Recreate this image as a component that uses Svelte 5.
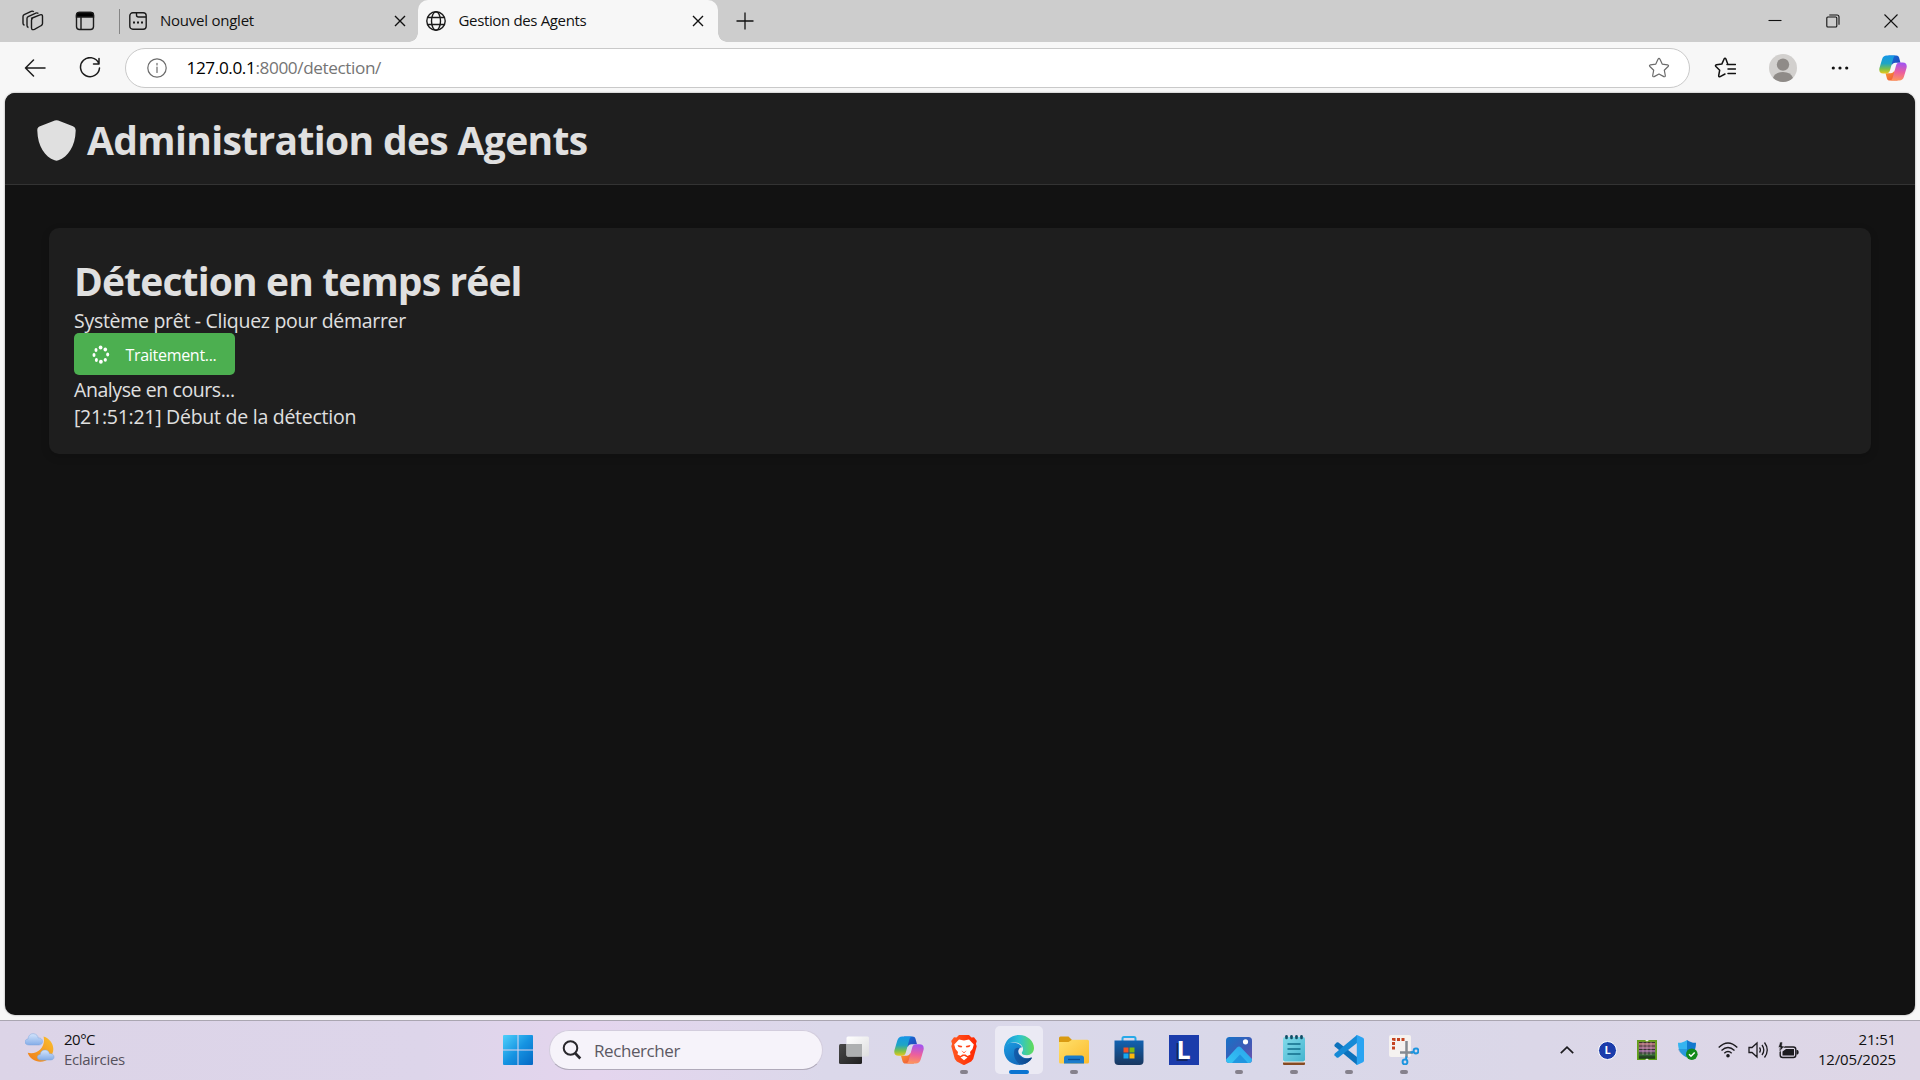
<script>
  const logs = ['Analyse en cours...', '[21:51:21] Début de la détection'];
</script>

{#snippet closeIcon()}
  <svg class="close" width="12" height="12" viewBox="0 0 12 12"><path d="M1 1 11 11M11 1 1 11" /></svg>
{/snippet}

{#snippet copilot(size, id)}
  <svg width={size} height={size} viewBox="0 0 30 30">
    <defs>
      <linearGradient id="{id}a" x1="0" y1="0" x2="0" y2="1">
        <stop offset="0" stop-color="#1596e8" /><stop offset=".45" stop-color="#1fa5c4" /><stop offset=".75" stop-color="#7cc04a" /><stop offset="1" stop-color="#e8c81c" />
      </linearGradient>
      <linearGradient id="{id}b" x1=".2" y1="0" x2=".1" y2="1">
        <stop offset="0" stop-color="#a455ee" /><stop offset=".5" stop-color="#ec5f9e" /><stop offset="1" stop-color="#ff9a56" />
      </linearGradient>
      <linearGradient id="{id}c" x1="0" y1="0" x2="1" y2="1">
        <stop offset="0" stop-color="#1272d8" /><stop offset="1" stop-color="#2442b8" />
      </linearGradient>
      <linearGradient id="{id}d" x1="0" y1="0" x2="1" y2="1">
        <stop offset="0" stop-color="#f8a02e" /><stop offset="1" stop-color="#ef4a3c" />
      </linearGradient>
    </defs>
    <path fill="url(#{id}c)" d="M10 1.5h8.5c1.6 0 2.5.8 3 2.3L23 9.3h-5.5c-2 0-3.2 1-3.8 3z" />
    <path fill="url(#{id}d)" d="M20 28.5h-8.500c-1.600 0-2.500-.8-3-2.300L7 20.700h5.500c2 0 3.200-1 3.800-3z" />
    <path fill="url(#{id}a)" d="M8.200 1.500H18c-1.500.3-2.200 1.500-2.700 3.200l-3.500 12.800c-.6 2.200-1.800 3.300-4 3.300H4.500C1 20.800-.3 18.500.5 15L3.300 5.500C4.200 2.700 5.700 1.500 8.200 1.500z" />
    <path fill="url(#{id}b)" d="M21.800 28.500H12c1.500-.3 2.200-1.500 2.700-3.200l3.500-12.800c.6-2.200 1.800-3.300 4-3.300h3.300c3.500 0 4.800 2.300 4 5.800l-2.800 9.500c-.9 2.800-2.400 4-4.900 4z" />
  </svg>
{/snippet}

<div class="screen">
  <header class="tabs">
    <div class="tools">
      <svg width="22" height="22" viewBox="0 0 22 22" class="line">
        <path d="M9 8.500 18 4.800q2.500-.8 2.500 1.500v7.200q0 1.400-1.200 2l-6.800 3.800q-3 1.200-3-1.500v-7.600q0-1.300 1.200-1.900" />
        <path d="M6.500 17.500q-1.500-.4-1.500-2V8.600q0-1.300 1.200-1.900l7.600-3.600q1.500-.6 2.600.5" />
        <path d="M2.500 15.200Q1 14.800 1 13.200V6.600q0-1.300 1.200-1.900l7-3.400q1.500-.6 2.600.5" />
      </svg>
      <svg width="20" height="20" viewBox="0 0 20 20" class="line">
        <rect x="1.500" y="1.500" width="17" height="17" rx="3" /><path d="M1.500 6V4q0-2.500 2.500-2.500h12q2.500 0 2.500 2.500v2z" fill="#000" /><path d="M6 6v12" />
      </svg>
    </div>
    <div class="tab">
      <svg width="18" height="18" viewBox="0 0 18 18" class="line tabicon">
        <rect x=".8" y=".8" width="16.400" height="16.400" rx="3" /><path d="M7.500 1v2q0 2 2 2h7.500" />
        <path d="M4 10.500h2M8 10.500h2M12 10.500h2" stroke-width="2" />
      </svg>
      <span class="title first">Nouvel onglet</span>
      {@render closeIcon()}
    </div>
    <div class="tab active">
      <svg width="20" height="20" viewBox="0 0 20 20" class="line tabicon">
        <circle cx="10" cy="10" r="9.200" /><ellipse cx="10" cy="10" rx="4.500" ry="9.200" /><path d="M1.800 6.500h16.400M1.800 13.500h16.400" />
      </svg>
      <span class="title">Gestion des Agents</span>
      {@render closeIcon()}
    </div>
    <svg class="plus" width="18" height="18" viewBox="0 0 18 18"><path d="M9 .5v17M.5 9h17" /></svg>
    <div class="window">
      <svg width="14" height="14" viewBox="0 0 14 14"><path d="M.5 6.500h13" /></svg>
      <svg width="14" height="14" viewBox="0 0 14 14"><rect x=".8" y="3" width="10" height="10" rx="1" /><path d="M3.300 1h7.700q2 0 2 2v7.800" /></svg>
      <svg width="14" height="14" viewBox="0 0 14 14"><path d="M.5.5l13 13M13.500.5l-13 13" /></svg>
    </div>
  </header>

  <nav class="toolbar">
    <svg class="back" width="22" height="18" viewBox="0 0 22 18"><path d="M21 9H1.500M9.500 1 1.500 9l8 8" /></svg>
    <svg class="reload" width="22" height="22" viewBox="0 0 22 22"><path d="M19.800 6.500A9.500 9.500 0 1 0 20.500 11M20 1.500v5.500h-5.500" /></svg>
    <div class="address">
      <svg width="20" height="20" viewBox="0 0 20 20" class="info"><circle cx="10" cy="10" r="9.200" /><path d="M10 9v5.500M10 5.300v1.700" /></svg>
      <span class="url"><b>127.0.0.1</b><span>:8000/detection/</span></span>
      <svg width="22" height="22" viewBox="0 0 22 22" class="star"><path d="M10 2.200q1-1.700 2 0l2.200 4.900 5.300.7q1.700.4.600 1.700L16.300 13.200l1 5.300q.1 1.700-1.500 1.100L11 17l-4.800 2.600q-1.600.6-1.500-1.100l1-5.300L1.900 9.500q-1.100-1.300.6-1.700l5.300-.7z" /></svg>
    </div>
    <svg class="fav" width="22" height="22" viewBox="0 0 22 22"><path d="M13.800 7.200 12 2.200q-1-1.700-2 0L7.800 7.100l-5.300.7Q.8 8.200 1.900 9.500l3.800 3.700-1 5.300q-.1 1.700 1.500 1.100L11 17M13 7.500h8.500M14 12h7.500M14 16.500h7.500" /></svg>
    <svg class="avatar" width="28" height="28" viewBox="0 0 28 28">
      <clipPath id="round"><circle cx="14" cy="14" r="14" /></clipPath>
      <g clip-path="url(#round)"><rect width="28" height="28" fill="#d2d0ce" /><circle cx="14" cy="10.600" r="6.200" fill="#8f8b88" /><path d="M4 28v-4q2-6 10-6t10 6v4z" fill="#8f8b88" /></g>
    </svg>
    <svg class="dots" width="18" height="4" viewBox="0 0 18 4"><circle cx="2.300" cy="2" r="1.600" /><circle cx="9" cy="2" r="1.600" /><circle cx="15.700" cy="2" r="1.600" /></svg>
    <span class="pilot">{@render copilot(28, 'top')}</span>
  </nav>

  <main class="page">
    <div class="banner">
      <svg width="39" height="41" viewBox="0 0 39 41"><path fill="#e0e0e0" d="M17.800.5q1.700-.7 3.400 0L36 6.200q2.800 1.200 2.700 4.200C38.300 26.500 31 36.500 21.400 40.300q-1.900.7-3.800 0C8 36.500.7 26.500.3 10.400.2 7.400 1.600 6.800 3 6.200z" /></svg>
      <h1>Administration des Agents</h1>
    </div>
    <section class="card">
      <h2>Détection en temps réel</h2>
      <p class="status">Système prêt - Cliquez pour démarrer</p>
      <button>
        <svg width="18" height="20" viewBox="0 0 18 20" fill="#fff">
          <ellipse cx="8.600" cy="2.600" rx="1.900" ry="2" /><ellipse cx="13.300" cy="4.600" rx="1.800" ry="2" /><ellipse cx="15.700" cy="9.500" rx="1.500" ry="2" />
          <ellipse cx="13.300" cy="14.800" rx="1.600" ry="1.900" /><ellipse cx="8.900" cy="16.800" rx="1.900" ry="2" /><ellipse cx="4.400" cy="15" rx="1.500" ry="2" />
          <ellipse cx="2" cy="10" rx="1.500" ry="2" /><ellipse cx="4" cy="5" rx="1.500" ry="2" />
        </svg>
        <span>Traitement...</span>
      </button>
      {#each logs as line, i}
        <p class:log={i === 1}>{line}</p>
      {/each}
    </section>
  </main>

  <footer class="taskbar">
    <div class="weather">
      <svg width="30" height="30" viewBox="0 0 30 30">
        <defs>
          <linearGradient id="moon" x1="1" y1="0" x2="0" y2="1"><stop offset="0" stop-color="#fbc02c" /><stop offset="1" stop-color="#ee7d1c" /></linearGradient>
          <linearGradient id="cloud" x1="0" y1="0" x2="0" y2="1"><stop offset="0" stop-color="#d4e4fb" /><stop offset="1" stop-color="#84ade8" /></linearGradient>
        </defs>
        <path fill="url(#moon)" d="M18.500 3.500C28 6.500 31.500 17 25 24.500 18 32 5.500 29 2.700 19.800c10 2.500 18.500-6.500 15.800-16.300z" />
        <path fill="url(#cloud)" stroke="#7fa6df" stroke-width=".5" d="M4 12c-5 0-5.500-5.500-1-6C3.500 1.500 6.500.3 9 .8c2.500.3 4 2.200 4.200 4.200 5.300-.8 6 7 .8 7z" />
        <path fill="url(#cloud)" stroke="#7fa6df" stroke-width=".5" d="M16 27c-4.500 0-5-5-.8-5.500.4-3 2.300-4.700 5-4.500 2.300 0 3.900 1.700 4.300 3.700 5.500-.8 6 6.300 1.500 6.300z" />
      </svg>
      <div><span class="temp">20°C</span><span class="sky">Eclaircies</span></div>
    </div>

    <svg class="start" width="30" height="30" viewBox="0 0 30 30">
      <linearGradient id="win" gradientUnits="userSpaceOnUse" x1="0" y1="0" x2="30" y2="30"><stop offset="0" stop-color="#4fd0fb" /><stop offset=".5" stop-color="#1694e2" /><stop offset="1" stop-color="#0568c4" /></linearGradient>
      <path fill="url(#win)" d="M1 0h13.500v14.500H0V1q0-1 1-1zM15.500 0H29q1 0 1 1v13.500H15.500zM0 15.500h14.500V30H1q-1 0-1-1zM15.500 15.500H30V29q0 1-1 1H15.500z" />
    </svg>
    <div class="search">
      <svg width="20" height="20" viewBox="0 0 20 20"><circle cx="8.500" cy="8" r="6.800" /><path d="m13 13 5.300 5.500" stroke-width="2.600" /></svg>
      <span>Rechercher</span>
    </div>

    <div class="apps">
      <div class="app">
        <svg width="30" height="30" viewBox="0 0 30 30">
          <linearGradient id="tv" x1="0" y1="0" x2="1" y2="1"><stop offset="0" stop-color="#494949" /><stop offset="1" stop-color="#202020" /></linearGradient>
          <linearGradient id="tw" x1="0" y1="0" x2="1" y2="1"><stop offset="0" stop-color="#fff" /><stop offset="1" stop-color="#dededf" /></linearGradient>
          <rect x="0" y="9" width="23" height="20" rx="1.500" fill="url(#tv)" /><rect x="7.500" y="1.500" width="22.500" height="20" rx="1.500" fill="url(#tw)" /><path d="M7.500 9H23v12.500H9q-1.500 0-1.500-1.500z" fill="#aeb0b1" />
        </svg>
      </div>
      <div class="app">{@render copilot(30, 'bar')}</div>
      <div class="app run">
        <svg width="26" height="30" viewBox="0 0 26 30">
          <linearGradient id="lion" x1="0" y1="0" x2="1" y2="0"><stop offset="0" stop-color="#ff5a22" /><stop offset="1" stop-color="#ff2600" /></linearGradient>
          <path fill="url(#lion)" d="M8 0h10l2.500 2.600 2.500-.4L25.800 6l-.9 2.700.8 2.600-3.500 12.800-2 2.300L13 30.200l-7.200-3.800-2-2.300L.3 11.300l.8-2.600L.2 6 3 2.200l2.500.4z" />
          <path fill="#fff" d="m8 4.600 5 .9 5-.9 4.800 4.900-1.300 4.500-2.500 3 .5 2.500-3 1.500-2-1.500h-3l-2 1.500-3-1.500.5-2.500-2.500-3-1.300-4.500zM13 20.800l3.500 1.700L13 25.300l-3.500-2.800z" />
          <path fill="#ff4318" d="m6.500 10 4.800 1-.8 1.500-3-.5zM19.500 10l-4.800 1 .8 1.500 3-.5zM11.300 13.200l-.5 2.500 2.200 1.600 2.200-1.600-.5-2.500.6 2.800-2.300 2.300-2.300-2.300z" />
        </svg>
      </div>
      <div class="app current">
        <svg width="30" height="30" viewBox="0 0 30 30">
          <defs>
            <linearGradient id="e1" x1="0" y1=".6" x2="1" y2=".6"><stop offset="0" stop-color="#168fd8" /><stop offset=".5" stop-color="#2bc1d5" /><stop offset="1" stop-color="#63dc55" /></linearGradient>
            <linearGradient id="e2" x1="0" y1="0" x2=".8" y2="1"><stop offset="0" stop-color="#1b9de2" /><stop offset="1" stop-color="#1260b4" /></linearGradient>
            <linearGradient id="e3" x1="0" y1="0" x2="1" y2="0"><stop offset="0" stop-color="#135fae" /><stop offset="1" stop-color="#0e4486" /></linearGradient>
          </defs>
          <path fill="url(#e2)" d="M0 14C2 7 9 6.500 13.500 8.500c5 2 5.500 5 3.200 7-2 5 2.300 9.200 10.800 7.800C24 29 18 30.500 13 29.800 4.500 28.500-.5 21.500 0 14z" />
          <path fill="url(#e3)" d="M10.500 14.500C8.500 21 12 28.500 18 29.500c4.500-.7 8-3 9.900-6.200.3-.7-.2-1-.8-.7-7.500 3-13.600-1.600-12.600-6.200.4-1.800 1.300-2.800 2-3.200-2.500-1-4.700-.6-6 1.300z" />
          <path fill="#ebeaf4" d="M17.800 12.300c1.300 2-.5 3.500-.3 5 .3 2 3.500 3.300 6.500 3-2.500 3.300-8.700.8-9.500-2.800-.6-2.700 1-5 3.300-5.200z" />
          <path fill="url(#e1)" d="M0 14C.8 5.500 7 0 15 0c9 0 15 6.500 15 13 0 4.500-3.300 7.200-7 7.200-3.500 0-6-1.400-5-3 2.300-3 .7-7-3-8.800C9 5.800 2.500 8 0 14z" />
        </svg>
      </div>
      <div class="app run">
        <svg width="30" height="28" viewBox="0 0 30 28">
          <linearGradient id="fold" x1="0" y1="0" x2="1" y2="1"><stop offset="0" stop-color="#ffe06c" /><stop offset="1" stop-color="#fcbb2c" /></linearGradient>
          <path fill="#d99a12" d="M0 2Q0 .5 1.500.5h8L13 4v3H0z" /><path fill="url(#fold)" d="M0 6h9.500L13 3.800h15.500q1.500 0 1.500 1.500V26q0 1.500-1.500 1.500h-27Q0 27.500 0 26z" />
          <path fill="#1b7ccb" d="M5 27.500V22q0-2.500 2.500-2.500h15Q25 19.500 25 22v5.500z" /><path d="M9 23.500h12" stroke="#0b4d91" stroke-width="1.300" />
        </svg>
      </div>
      <div class="app">
        <svg width="30" height="30" viewBox="0 0 30 30">
          <linearGradient id="shop" x1="0" y1="0" x2="0" y2="1"><stop offset="0" stop-color="#1262b1" /><stop offset="1" stop-color="#19375f" /></linearGradient>
          <path d="M8.500 7V3.500q0-1.500 1.500-1.500h10q1.500 0 1.500 1.500V7" fill="none" stroke="#28a9e8" stroke-width="2" />
          <path fill="url(#shop)" d="M.5 5.500h29V26q0 4-4 4h-21q-4 0-4-4z" />
          <path fill="#f15325" d="M9.500 12.500h5v5h-5z" /><path fill="#7fbb11" d="M15.500 12.500h5v5h-5z" /><path fill="#16a8ef" d="M9.500 18.500h5v5h-5z" /><path fill="#fdb90b" d="M15.500 18.500h5v5h-5z" />
        </svg>
      </div>
      <div class="app"><span class="letter">L</span></div>
      <div class="app run">
        <svg width="26" height="26" viewBox="0 0 26 26">
          <defs>
            <linearGradient id="ph" x1="0" y1="0" x2="1" y2="1"><stop offset="0" stop-color="#1673c8" /><stop offset=".6" stop-color="#4059b5" /><stop offset="1" stop-color="#7154ad" /></linearGradient>
            <linearGradient id="hill" x1="0" y1="1" x2="1" y2="0"><stop offset="0" stop-color="#35c6f4" /><stop offset="1" stop-color="#2aa0eb" /></linearGradient>
            <clipPath id="phc"><rect width="26" height="26" rx="3.500" /></clipPath>
          </defs>
          <g clip-path="url(#phc)"><rect width="26" height="26" fill="url(#ph)" /><path fill="url(#hill)" d="M0 22.500 11 10.500q2-2 4 0l11 11.500v4H0z" /><path fill="#1782d6" d="m6 26 8-8.500 8 8.500z" opacity=".65" /></g>
          <circle cx="19.500" cy="4.800" r="2.600" fill="#fff" />
        </svg>
      </div>
      <div class="app run">
        <svg width="22" height="30" viewBox="0 0 22 30">
          <linearGradient id="note" x1="0" y1="0" x2="1" y2="1"><stop offset="0" stop-color="#83dbea" /><stop offset="1" stop-color="#44b4cf" /></linearGradient>
          <path fill="#f3efe9" d="M0 24h22v4H0z" /><path fill="#864a22" d="M0 27.500h22V29q0 1-1 1H1q-1 0-1-1z" />
          <rect y="2" width="22" height="24.500" rx="2" fill="url(#note)" />
          <path d="M4.500 9h13M4.500 14h13M4.500 19h13" stroke="#126e8b" stroke-width="1.700" />
          <g fill="#124e66"><rect x="2.200" y="0" width="2.600" height="4.200" rx="1.300" /><rect x="7.200" y="0" width="2.600" height="4.200" rx="1.300" /><rect x="12.200" y="0" width="2.600" height="4.200" rx="1.300" /><rect x="17.200" y="0" width="2.600" height="4.200" rx="1.300" /></g>
        </svg>
      </div>
      <div class="app run">
        <svg width="30" height="30" viewBox="0 0 30 30">
          <path fill="#0d72bc" d="M.5 9.800 2.600 7.600q.9-.7 1.900 0L23 22v8L.8 11.500q-.8-.9-.3-1.700z" />
          <path fill="#168ad6" d="M.5 20.200l2.100 2.200q.9.700 1.900 0L23 8V0L.8 18.500q-.8.900-.3 1.700z" />
          <path fill="#2aa4f2" d="M22 .2q.8-.4 1.600 0l5.400 2.600q1 .6 1 1.700v21q0 1.100-1 1.700l-5.400 2.600q-.8.400-1.600 0 .8-.4.800-1.600V1.800Q22.800.6 22 .2z" />
        </svg>
      </div>
      <div class="app run">
        <svg width="30" height="30" viewBox="0 0 30 30">
          <rect width="22" height="22" rx="2" fill="#f5f2f0" />
          <path d="M15.500 4.500H4.500V16" fill="none" stroke="#c5431f" stroke-width="3" stroke-dasharray="3 1.500" />
          <path d="M17.500 6v16.500M11 17.500h13" stroke="#858b91" stroke-width="2.500" />
          <circle cx="16" cy="27" r="2.400" fill="none" stroke="#1d95df" stroke-width="2" /><circle cx="27" cy="16" r="2.400" fill="none" stroke="#1d95df" stroke-width="2" />
          <path d="m17 24 .5-2.500M21.500 17.500l3-.5" stroke="#1d95df" stroke-width="2" />
        </svg>
      </div>
    </div>

    <div class="tray">
      <svg width="14" height="8" viewBox="0 0 14 8" fill="none" stroke="#1c1b1f" stroke-width="1.700"><path d="m.8 7.200 6.200-6 6.200 6" /></svg>
      <span class="round">L</span>
      <svg width="20" height="20" viewBox="0 0 20 20">
        <linearGradient id="chip" x1="0" y1="0" x2="0" y2="1"><stop offset="0" stop-color="#b5746a" /><stop offset=".55" stop-color="#94689a" /><stop offset=".75" stop-color="#3a6a3a" /><stop offset="1" stop-color="#10420f" /></linearGradient>
        <rect width="20" height="20" fill="#62a01c" /><rect x="1.800" y="1.800" width="16.400" height="17" fill="url(#chip)" />
        <path d="M2 2.500h16M2 6h16M2 9.500h16M2 13h16M2 17h16" stroke="#2a2c26" stroke-width=".9" /><path d="M6 2v13M10 2v13M14 2v13" stroke="#e2b4cb" stroke-width=".7" opacity=".7" />
        <path d="M8 0h4l-2 1.500zM8 20h4l-2-1.500z" fill="#f5f7f2" />
      </svg>
      <svg width="20" height="20" viewBox="0 0 20 20">
        <path fill="#35b4f0" d="M9 0v17.500C3.500 15 0 11 0 2.800 3.500 3 6 2 9 0z" /><path fill="#1279ce" d="M9 0c3 2 5.500 3 9 2.800 0 8.200-3.500 12.200-9 14.700z" /><path fill="#1266b5" d="M0 9h9v8.500C4.500 15.500 1 12.500 0 9z" opacity=".35" />
        <circle cx="13.800" cy="14.200" r="5.800" fill="#128a1b" /><path d="m11 14.200 2 2 3.700-3.800" fill="none" stroke="#fff" stroke-width="1.500" />
      </svg>
      <svg width="20" height="16" viewBox="0 0 20 16" fill="none" stroke="#1c1b1f" stroke-width="1.400"><path d="M.7 5.500q9.300-9 18.600 0M3.500 8.500q6.500-6.200 13 0M6.300 11.300q3.700-3.400 7.400 0" /><circle cx="10" cy="13.700" r="1.100" fill="#1c1b1f" /></svg>
      <svg width="21" height="18" viewBox="0 0 21 18" fill="none" stroke="#1c1b1f" stroke-width="1.300"><path d="M1 6.500h3L9 2v14l-5-4.500H1zM11.500 6.500q1.800 2.500 0 5M14 4q3.600 5 0 10M16.500 1.500q5.500 7.500 0 15" /></svg>
      <svg width="21" height="17" viewBox="0 0 21 17"><rect x="2.200" y="5" width="15.600" height="10.500" rx="2.500" fill="none" stroke="#1c1b1f" stroke-width="1.400" /><path fill="#1c1b1f" d="M4.500 9.500 8 7h8v6.500H4.500zM18.500 8h1q1.200.3 1.200 2.300t-1.200 2.200h-1z" /><path fill="#1c1b1f" stroke="#ddd6e8" stroke-width=".6" d="M4.500 0H2L.3 5.500h2L1.500 10l5-6H4z" /></svg>
      <div class="clock"><span class="hour">21:51</span><span>12/05/2025</span></div>
    </div>
  </footer>
</div>

<style>
  :global(body) { margin: 0; overflow: hidden; }
  .screen {
    width: 1920px; height: 1080px; box-sizing: border-box; display: flex; flex-direction: column;
    background: #f7f7f7; font-family: "Open Sans", "Noto Sans", sans-serif; color: #111;
  }
  svg { display: block; flex: none; }
  .line { fill: none; stroke: #1b1b1b; stroke-width: 1.4; }
  h1, h2, p { margin: 0; }

  /* Tab strip */
  .tabs { height: 42px; flex: none; display: flex; align-items: center; background: #cdcdcd; }
  .tools { width: 120px; height: 25px; box-sizing: border-box; padding-left: 22px; display: flex; align-items: center; gap: 31px; border-right: 1px solid #858585; }
  .tab { display: flex; align-items: center; width: 298px; height: 42px; box-sizing: border-box; padding: 0 12px 0 9px; font-size: 15px; letter-spacing: -0.35px; }
  .tab .title { flex: 1; margin-left: 13px; line-height: 40px; height: 42px; color: #111; }
  .tab .first { letter-spacing: -0.24px; }
  .close { fill: none; stroke: #111; stroke-width: 1.4; }
  .active { position: relative; width: 300px; background: #f7f7f7; border-radius: 10px 10px 0 0; padding: 0 14px 0 8px; }
  .active .title { margin-left: 12.5px; }
  .active::before, .active::after { content: ""; position: absolute; bottom: 0; width: 9px; height: 9px; }
  .active::before { left: -9px; background: radial-gradient(circle at 0 0, transparent 8.5px, #f7f7f7 9px); }
  .active::after { right: -9px; background: radial-gradient(circle at 100% 0, transparent 8.5px, #f7f7f7 9px); }
  .tabicon { margin-bottom: 1px; }
  .plus { margin-left: 18px; margin-bottom: 1px; fill: none; stroke: #111; stroke-width: 1.3; }
  .window { margin-left: auto; padding-right: 22px; display: flex; gap: 44px; fill: none; stroke: #111; stroke-width: 1.1; }

  /* Toolbar */
  .toolbar { height: 51px; flex: none; display: flex; align-items: center; box-sizing: border-box; padding: 0 13px 0 24px; }
  .toolbar path { stroke-linecap: round; stroke-linejoin: round; }
  .back, .reload { fill: none; stroke: #1b1b1b; stroke-width: 1.5; }
  .reload { margin-left: 33px; }
  .address { width: 1565px; height: 40px; box-sizing: border-box; margin-left: 24px; padding: 0 19px 0 21px; display: flex; align-items: center; background: #fff; border: 1px solid #c9c9c9; border-radius: 20px; }
  .info, .star { fill: none; stroke: #6b6b6b; stroke-width: 1.2; }
  .url { flex: 1; height: 38px; margin-left: 19.5px; font-size: 17.2px; line-height: 37px; }
  .url b { font-weight: 400; color: #000; letter-spacing: -0.4px; }
  .url span { color: #757575; letter-spacing: -0.4px; }
  .fav { margin-left: 24px; fill: none; stroke: #111; stroke-width: 1.5; }
  .avatar { margin-left: 33px; }
  .dots { margin-left: 34px; fill: #111; }
  .pilot { margin-left: 30px; }

  /* Web page */
  .page { height: 922px; flex: none; margin: 0 5px; background: #121212; border-radius: 10px; overflow: hidden; color: #e0e0e0; box-shadow: 0 0 2px #888; }
  .banner { height: 92px; box-sizing: border-box; padding: 1px 0 0 32px; display: flex; align-items: center; gap: 11px; background: #1e1e1e; border-bottom: 1px solid #333; }
  .banner svg { margin-top: 2px; }
  h1, h2 { font-size: 39px; font-weight: 700; letter-spacing: -0.65px; }
  h2 { line-height: 52px; padding-top: 2px; letter-spacing: -0.87px; }
  .card { margin: 43px 44px 0; padding: 25px 25px 24px; background: #1e1e1e; border-radius: 10px; box-shadow: 0 3px 8px rgba(0, 0, 0, 0.15); }
  .card p { font-size: 19.5px; line-height: 27px; letter-spacing: -0.42px; }
  .card .status { height: 26px; letter-spacing: -0.29px; }
  .card .log { letter-spacing: -0.26px; }
  button { display: flex; align-items: center; width: 161px; height: 42px; box-sizing: border-box; margin: 0 0 1px; padding: 1px 0 0 18px; gap: 15.5px; border: 0; border-radius: 5px; background: #4caf50; color: #fff; font: 400 16px "Open Sans", sans-serif; letter-spacing: -0.3px; }

  /* Taskbar */
  .taskbar { height: 60px; flex: none; margin-top: auto; box-sizing: border-box; border-top: 1px solid #aaa6b1; padding: 0 24px 0 25px; display: flex; align-items: center; background: linear-gradient(90deg, #dcd4e7 0, #ddd5ea 22%, #e4d5ee 31%, #dbd8ea 43%, #d9d8e9 65%, #dbd7e8 80%, #ded6e6 100%); }
  .weather { width: 478px; display: flex; gap: 9px; align-items: center; font-size: 15px; }
  .weather div { display: flex; flex-direction: column; line-height: 20px; margin-bottom: 4px; }
  .weather svg { margin-bottom: 5px; }
  .temp { letter-spacing: -0.5px; }
  .sky { color: #55515c; letter-spacing: -0.33px; }
  .start { margin-bottom: 1px; }
  .search { width: 274px; height: 40px; box-sizing: border-box; margin: 0 3px 1px 16px; padding-left: 12px; display: flex; align-items: center; gap: 12px; background: #f6f3fa; border: 1px solid #d3cddd; border-bottom-color: #b0aaba; border-radius: 20px; font-size: 17px; letter-spacing: -0.42px; color: #5c5963; }
  .search svg { fill: none; stroke: #29272c; stroke-width: 2; }
  .apps { display: flex; margin-bottom: 1px; }
  .app { position: relative; width: 55px; height: 48px; display: flex; align-items: center; justify-content: center; }
  .run::after, .current::after { content: ""; position: absolute; bottom: 0; left: 23.5px; width: 8px; height: 4px; border-radius: 2px; background: #85818c; }
  .current { width: 48px; margin: 0 3.5px; background: #ebeaf4; border-radius: 5px; }
  .current::after { left: 14px; width: 20px; background: #0b74d1; }
  .letter { width: 30px; height: 30px; background: #1b3cab; color: #fff; font: 700 25px/29px "Open Sans", sans-serif; text-align: center; text-shadow: -2px 2px #12245f; }
  .tray { margin-left: auto; margin-bottom: 1px; display: flex; align-items: center; }
  .tray svg:nth-of-type(1) { margin-right: 24px; }
  .round { width: 17px; height: 17px; border: 1px solid #fff; border-radius: 50%; background: #1b3cab; color: #fff; font: 700 11px/16px "Open Sans", sans-serif; text-align: center; margin-right: 20px; }
  .tray svg:nth-of-type(2) { margin-right: 21px; }
  .tray svg:nth-of-type(3) { margin-right: 20px; }
  .tray svg:nth-of-type(4) { margin-right: 10px; }
  .tray svg:nth-of-type(5) { margin-right: 9px; }
  .clock { width: 97px; margin-bottom: 3px; display: flex; flex-direction: column; align-items: flex-end; font-size: 15px; line-height: 20px; letter-spacing: -0.15px; }
</style>
